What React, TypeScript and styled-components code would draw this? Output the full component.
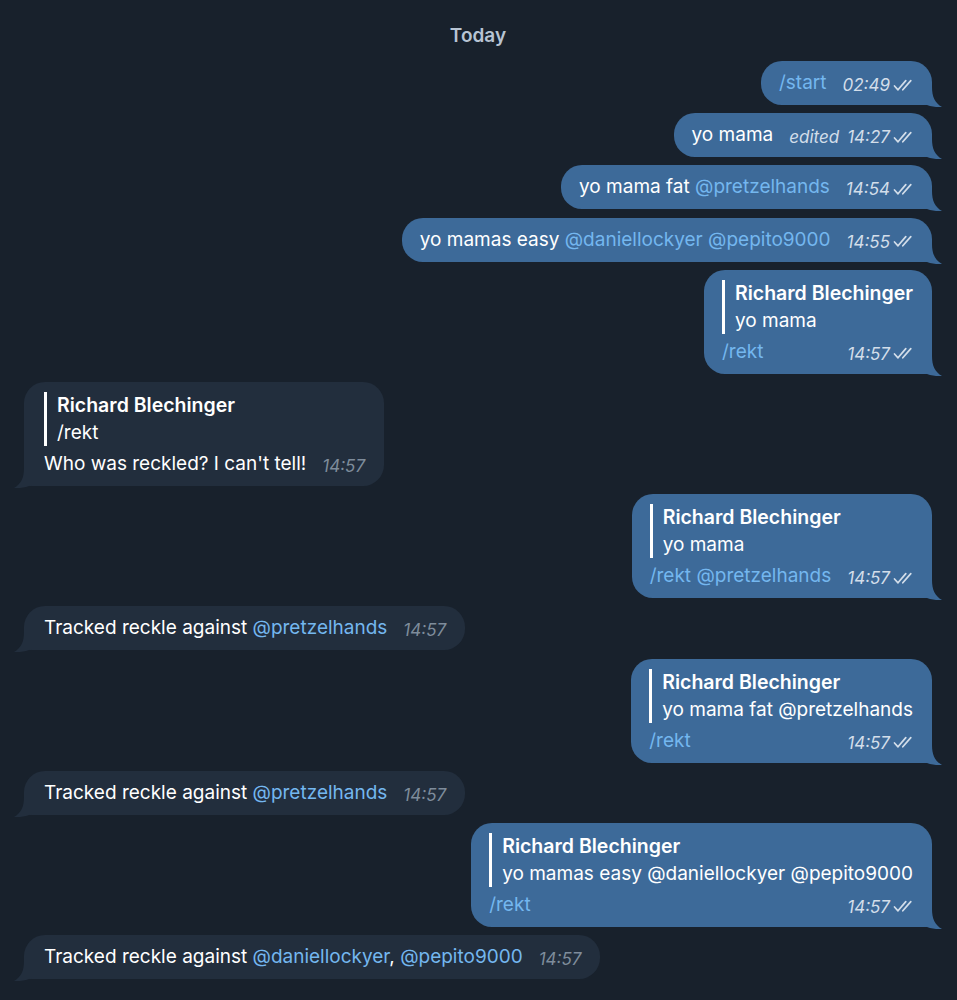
import { FC, ReactElement, ReactNode } from 'react';
import styled, { createGlobalStyle } from 'styled-components';

const Global = createGlobalStyle`
    html, body {
        margin: 0;
        padding: 0;
        background: #18212c;
    }
    body {
        font-family: Inter, "Noto Sans", "Liberation Sans", sans-serif;
        -webkit-font-smoothing: antialiased;
    }
`;

const Checks: FC = (): ReactElement => (
    <CheckIcon viewBox="0 0 20 13" width="20" height="13">
        <path d="M1.5 7 L5 10.8 L12.8 1.6" />
        <path d="M9.8 10.8 L17.8 1.6" />
    </CheckIcon>
);

const Tail: FC<{ $out?: boolean }> = ({ $out }): ReactElement => (
    <TailShape $out={$out} viewBox="0 0 18 20" width="18" height="20">
        <path d="M0 0 H8 C8 10 11 16 18 20 C12 20.5 6 19.5 0 17 Z" />
    </TailShape>
);

type Msg = {
    out?: boolean;
    text: ReactNode;
    time: string;
    edited?: boolean;
    reply?: { name: string; text: ReactNode };
};

const L: FC<{ children: ReactNode }> = ({ children }): ReactElement => <Link>{children}</Link>;

const messages: Msg[] = [
    { out: true, text: <L>/start</L>, time: '02:49' },
    { out: true, text: 'yo mama', time: '14:27', edited: true },
    { out: true, text: <>yo mama fat <L>@pretzelhands</L></>, time: '14:54' },
    { out: true, text: <>yo mamas easy <L>@daniellockyer</L> <L>@pepito9000</L></>, time: '14:55' },
    { out: true, reply: { name: 'Richard Blechinger', text: 'yo mama' }, text: <L>/rekt</L>, time: '14:57' },
    { reply: { name: 'Richard Blechinger', text: '/rekt' }, text: "Who was reckled? I can't tell!", time: '14:57' },
    { out: true, reply: { name: 'Richard Blechinger', text: 'yo mama' }, text: <><L>/rekt</L> <L>@pretzelhands</L></>, time: '14:57' },
    { text: <>Tracked reckle against <L>@pretzelhands</L></>, time: '14:57' },
    { out: true, reply: { name: 'Richard Blechinger', text: 'yo mama fat @pretzelhands' }, text: <L>/rekt</L>, time: '14:57' },
    { text: <>Tracked reckle against <L>@pretzelhands</L></>, time: '14:57' },
    { out: true, reply: { name: 'Richard Blechinger', text: 'yo mamas easy @daniellockyer @pepito9000' }, text: <L>/rekt</L>, time: '14:57' },
    { text: <>Tracked reckle against <L>@daniellockyer</L>, <L>@pepito9000</L></>, time: '14:57' }
];

const MetaInfo: FC<{ m: Msg }> = ({ m }): ReactElement => (
    <Meta $out={m.out}>
        {m.edited && <Edited>edited</Edited>}
        <span>{m.time}</span>
        {m.out && <Checks />}
    </Meta>
);

const App: FC = (): ReactElement => {
    return (
        <Page>
            <Global />
            <DateLabel>Today</DateLabel>
            <List>
                {messages.map((m, i) => (
                    <Row key={i} $out={m.out}>
                        <Bubble $out={m.out}>
                            {m.reply ? (
                                <>
                                    <Quote>
                                        <QuoteName>{m.reply.name}</QuoteName>
                                        <QuoteText>{m.reply.text}</QuoteText>
                                    </Quote>
                                    <Footer>
                                        <Text>{m.text}</Text>
                                        <MetaInfo m={m} />
                                    </Footer>
                                </>
                            ) : (
                                <Line>
                                    <Text>{m.text}</Text>
                                    <MetaInfo m={m} />
                                </Line>
                            )}
                            <Tail $out={m.out} />
                        </Bubble>
                    </Row>
                ))}
            </List>
        </Page>
    );
};

const Page = styled.div`
    min-height: 1000px;
    background: #18212c;
    padding: 24px 25px 20px 24px;
    box-sizing: border-box;
    color: #ffffff;
`;
const DateLabel = styled.div`
    text-align: center;
    font-size: 19px;
    line-height: 24px;
    font-weight: 600;
    color: #b7c4d3;
    margin-bottom: 13px;
`;
const List = styled.div`
    display: flex;
    flex-direction: column;
    gap: 8.2px;
`;
const Row = styled.div<{ $out?: boolean }>`
    display: flex;
    justify-content: ${(p) => (p.$out ? 'flex-end' : 'flex-start')};
`;
const Bubble = styled.div<{ $out?: boolean }>`
    position: relative;
    padding: ${(p) => (p.$out ? '10px 19px 10px 18px' : '10px 19px 10px 20px')};
    border-radius: 21px;
    ${(p) => (p.$out ? 'border-bottom-right-radius: 4px;' : 'border-bottom-left-radius: 4px;')}
    background: ${(p) => (p.$out ? '#3d6a99' : '#222e3d')};
    font-size: 19px;
    line-height: 24px;
`;
const TailShape = styled.svg<{ $out?: boolean }>`
    position: absolute;
    bottom: -2px;
    fill: ${(p) => (p.$out ? '#3d6a99' : '#222e3d')};
    ${(p) => (p.$out ? 'right: -10px;' : 'left: -10px; transform: scaleX(-1);')}
`;
const Line = styled.div`
    display: flex;
    align-items: baseline;
`;
const Text = styled.span`
    color: #ffffff;
    white-space: nowrap;
`;
const Link = styled.span`
    color: #74b7ef;
`;
const Meta = styled.span<{ $out?: boolean }>`
    display: inline-flex;
    align-items: baseline;
    margin-left: 16px;
    font-size: 17px;
    font-style: italic;
    color: ${(p) => (p.$out ? '#d3deea' : '#7e8c9b')};
    white-space: nowrap;
    transform: translateY(2px);
`;
const Edited = styled.span`
    margin-right: 8px;
`;
const CheckIcon = styled.svg`
    fill: none;
    stroke: #d3deea;
    stroke-width: 1.7;
    stroke-linecap: round;
    stroke-linejoin: round;
    margin-left: 3px;
    align-self: center;
`;
const Quote = styled.div`
    border-left: 3px solid #ffffff;
    padding-left: 10px;
`;
const QuoteName = styled.div`
    font-size: 19.5px;
    font-weight: 600;
    line-height: 27px;
    white-space: nowrap;
`;
const QuoteText = styled.div`
    line-height: 27px;
    white-space: nowrap;
`;
const Footer = styled.div`
    display: flex;
    justify-content: space-between;
    align-items: baseline;
    margin-top: 6px;
    line-height: 24px;
`;

export default App;
